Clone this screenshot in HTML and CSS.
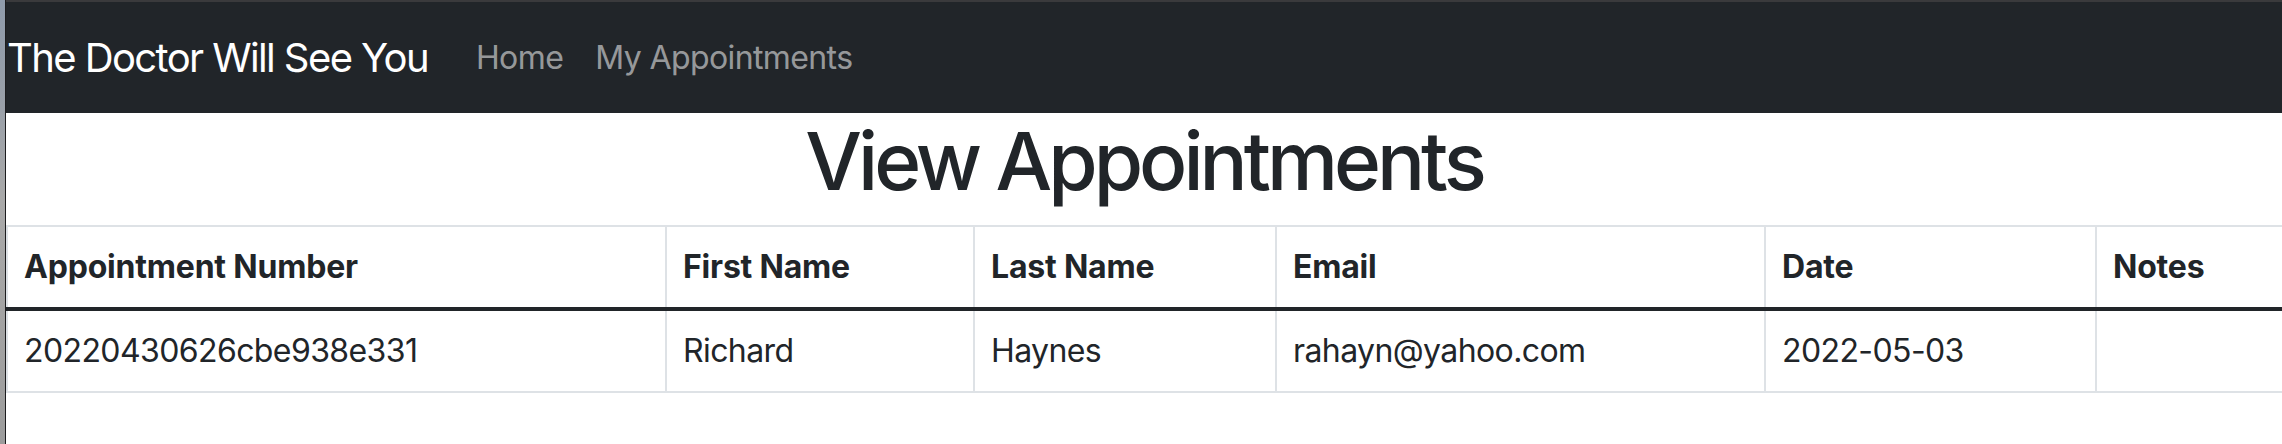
FILE: index.html
```html
<!DOCTYPE html>
<html lang="en">
<head>
<meta charset="utf-8">
<title>View Appointments</title>
<link rel="stylesheet" href="styles.css">
</head>
<body>
<div class="chrome-edge"></div>
<div class="page">
  <nav class="navbar">
    <a class="brand" href="#">The Doctor Will See You</a>
    <ul class="nav">
      <li><a class="nav-link" href="#">Home</a></li>
      <li><a class="nav-link" href="#">My Appointments</a></li>
    </ul>
  </nav>
  <h1 class="title">View Appointments</h1>
  <table class="table">
    <colgroup>
      <col class="c1"><col class="c2"><col class="c3"><col class="c4"><col class="c5"><col class="c6">
    </colgroup>
    <thead>
      <tr>
        <th>Appointment Number</th>
        <th>First Name</th>
        <th>Last Name</th>
        <th>Email</th>
        <th>Date</th>
        <th>Notes</th>
      </tr>
    </thead>
    <tbody>
      <tr>
        <td>20220430626cbe938e331</td>
        <td>Richard</td>
        <td>Haynes</td>
        <td>rahayn@yahoo.com</td>
        <td>2022-05-03</td>
        <td></td>
      </tr>
    </tbody>
  </table>
</div>
</body>
</html>
```
FILE: styles.css
```css
html, body {
  margin: 0;
  padding: 0;
  height: 100%;
  background: #ffffff;
}
body {
  display: flex;
  font-family: Inter, "Liberation Sans", sans-serif;
  color: #212529;
  overflow: hidden;
}
.chrome-edge {
  flex: 0 0 5px;
  background: linear-gradient(180deg, #8f9bab 0px, #9aa0a8 110px, #a9a9a9 200px, #9c9c9c 444px);
  border-right: 1.5px solid #1c1c1e;
}
.page {
  flex: 1;
  min-width: 0;
  overflow: hidden;
}
.navbar {
  height: 111px;
  border-top: 2px solid #3a3a3c;
  background: #212529;
  display: flex;
  align-items: center;
  padding-left: 1px;
}
.brand {
  color: #ffffff;
  text-decoration: none;
  font-size: 40px;
  line-height: 60px;
  margin-right: 32px;
  letter-spacing: -1.6px;
}
.nav {
  display: flex;
  list-style: none;
  margin: 0;
  padding: 0;
}
.nav-link {
  display: block;
  padding: 0 16px;
  color: rgba(255, 255, 255, 0.55);
  text-decoration: none;
  font-size: 32px;
  line-height: 48px;
  letter-spacing: -0.6px;
}
.title {
  margin: 0 0 16px;
  text-align: center;
  font-size: 80px;
  font-weight: 500;
  line-height: 96px;
  letter-spacing: -4px;
}
.table {
  border-collapse: collapse;
  table-layout: fixed;
  width: 2490px;
  font-size: 32px;
  line-height: 48px;
}
.c1 { width: 659px; }
.c2 { width: 308px; }
.c3 { width: 302px; }
.c4 { width: 489px; }
.c5 { width: 331px; }
.c6 { width: 401px; }
.table th,
.table td {
  border: 2px solid #dee2e6;
  padding: 16px 16px;
  text-align: left;
  vertical-align: bottom;
  white-space: nowrap;
  letter-spacing: -0.6px;
}
.table th {
  font-weight: 700;
  letter-spacing: -0.2px;
}
.table tbody tr:first-child td {
  border-top: 4px solid #212529;
}
```
